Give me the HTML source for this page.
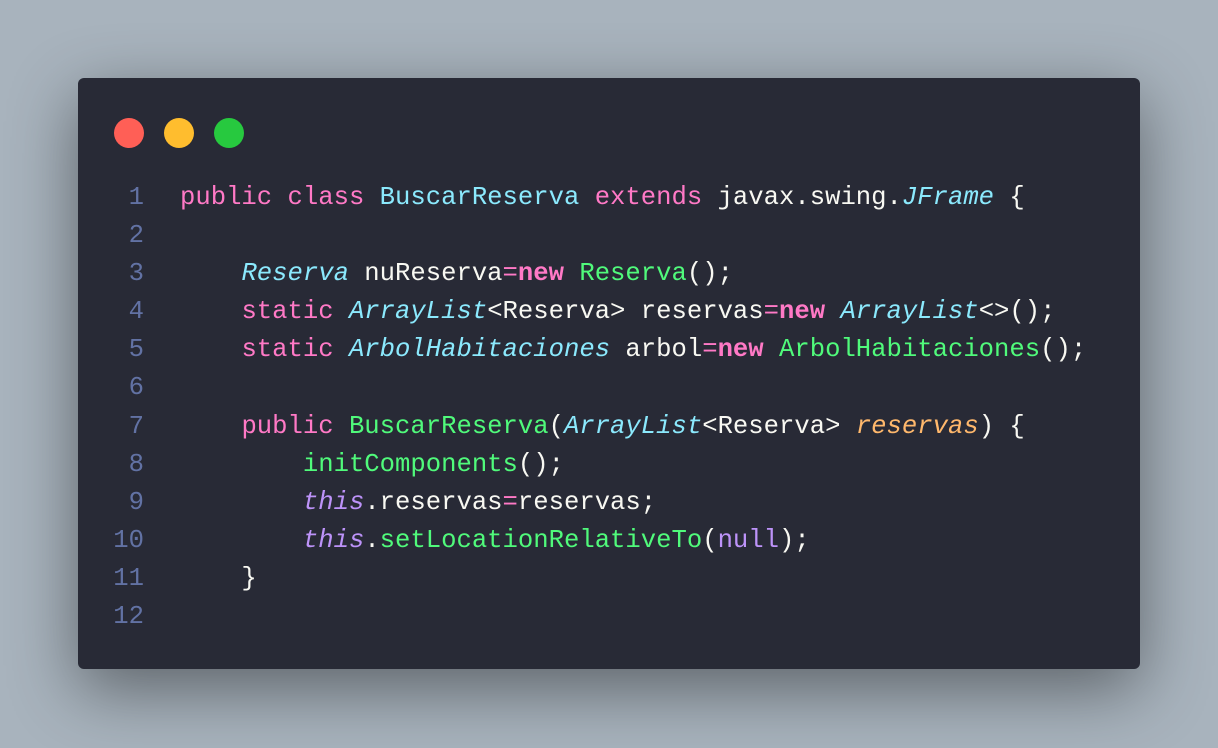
<!DOCTYPE html>
<html><head><style>
html,body{margin:0;padding:0;}
body{width:1218px;height:748px;overflow:hidden;background:#a8b3bd;position:relative;font-family:"Liberation Mono",monospace;}
.win{position:absolute;left:78px;top:78px;width:1062px;height:591px;background:#282a36;border-radius:6px;box-shadow:0 20px 68px rgba(0,0,0,0.45);}
.dot{position:absolute;top:40px;width:30px;height:30px;border-radius:50%;}
.code{position:absolute;left:0;top:101px;font-size:25.6px;line-height:38.1px;color:#f8f8f2;white-space:pre;}
.ln{display:inline-block;width:66px;text-align:right;color:#6272a4;margin-right:36px;}
.k{color:#ff79c6}.c{color:#8be9fd}.i{color:#8be9fd;font-style:italic}.g{color:#50fa7b}.o{color:#ffb86c;font-style:italic}.p{color:#bd93f9;font-style:italic}.pu{color:#bd93f9}.b{font-weight:bold;color:#ff79c6}
</style></head><body>
<div class="win">
<div class="dot" style="left:36px;background:#ff5f56"></div>
<div class="dot" style="left:86px;background:#ffbd2e"></div>
<div class="dot" style="left:136px;background:#27c93f"></div>
<div class="code"><div><span class="ln">1</span><span class="k">public</span> <span class="k">class</span> <span class="c">BuscarReserva</span> <span class="k">extends</span> javax.swing.<span class="i">JFrame</span> {</div><div><span class="ln">2</span></div><div><span class="ln">3</span>    <span class="i">Reserva</span> nuReserva<span class="k">=</span><span class="b">new</span> <span class="g">Reserva</span>();</div><div><span class="ln">4</span>    <span class="k">static</span> <span class="i">ArrayList</span>&lt;Reserva&gt; reservas<span class="k">=</span><span class="b">new</span> <span class="i">ArrayList</span>&lt;&gt;();</div><div><span class="ln">5</span>    <span class="k">static</span> <span class="i">ArbolHabitaciones</span> arbol<span class="k">=</span><span class="b">new</span> <span class="g">ArbolHabitaciones</span>();</div><div><span class="ln">6</span></div><div><span class="ln">7</span>    <span class="k">public</span> <span class="g">BuscarReserva</span>(<span class="i">ArrayList</span>&lt;Reserva&gt; <span class="o">reservas</span>) {</div><div><span class="ln">8</span>        <span class="g">initComponents</span>();</div><div><span class="ln">9</span>        <span class="p">this</span>.reservas<span class="k">=</span>reservas;</div><div><span class="ln">10</span>        <span class="p">this</span>.<span class="g">setLocationRelativeTo</span>(<span class="pu">null</span>);</div><div><span class="ln">11</span>    }</div><div><span class="ln">12</span></div></div>
</div>
</body></html>
